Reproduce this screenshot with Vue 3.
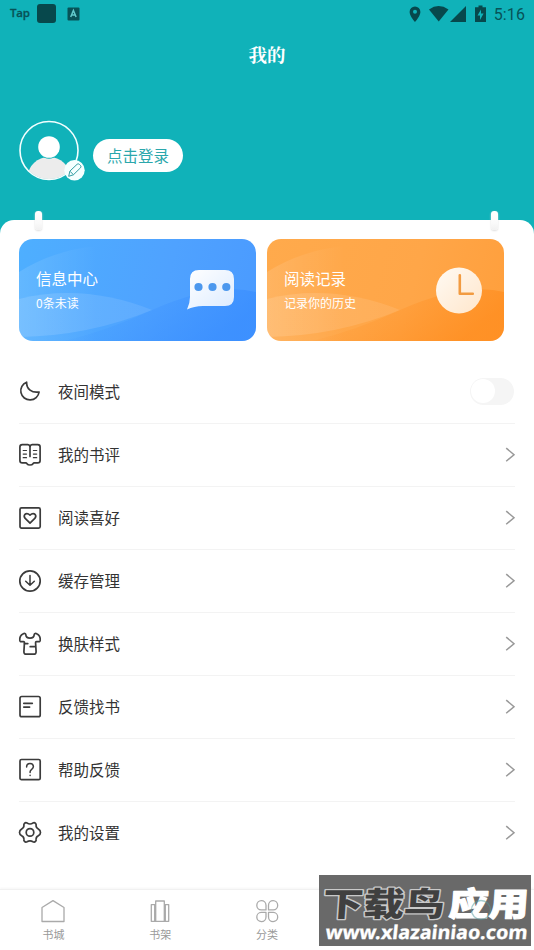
<script setup>
const cards = [
  { kind: 'blue', title: '信息中心', sub: '0条未读' },
  { kind: 'orange', title: '阅读记录', sub: '记录你的历史' },
]
const rows = [
  { icon: 'moon', label: '夜间模式' },
  { icon: 'book', label: '我的书评' },
  { icon: 'heart', label: '阅读喜好' },
  { icon: 'download', label: '缓存管理' },
  { icon: 'shirt', label: '换肤样式' },
  { icon: 'note', label: '反馈找书' },
  { icon: 'help', label: '帮助反馈' },
  { icon: 'gear', label: '我的设置' },
]
const tabs = [
  { icon: 'home', label: '书城' },
  { icon: 'shelf', label: '书架' },
  { icon: 'grid', label: '分类' },
]
</script>

<template>
  <div class="screen">
    <header class="hero">
      <div class="status">
        <span class="tap">Tap</span>
        <span class="block"></span>
        <svg class="abox" width="13" height="14" viewBox="0 0 13 14">
          <rect x="0.5" y="0.5" width="12" height="13" rx="1" fill="#075257" />
          <path d="M3.7 10 6.4 3.5 9.1 10M4.7 8h3.4" fill="none" stroke="#62c9cb" stroke-width="1.5" />
        </svg>
        <svg class="sys" width="75" height="20" viewBox="0 0 75 20">
          <g fill="#07484c">
            <path fill-rule="evenodd" d="M6 2.500a5.400 5.400 0 0 0-5.400 5.400C.6 12 6 18 6 18s5.400-6 5.400-10.100A5.400 5.400 0 0 0 6 2.500Zm0 3.300a2 2 0 1 1 0 4 2 2 0 0 1 0-4Z" />
            <path d="M20 5.500Q29.500-1.300 39.500 5.500L29.700 17.500Z" />
            <path d="M57 2v16H41Z" />
            <path fill-rule="evenodd" d="M69.500 1.500h4v1.800H77V18H66V3.300h3.500ZM72 5.500l-3.500 6h2.500v4.500l3.600-6.500h-2.600Z" />
          </g>
        </svg>
        <span class="time">5:16</span>
      </div>
      <h1>我的</h1>
      <div class="profile">
        <div class="avatar">
          <svg width="68" height="64" viewBox="0 0 68 64">
            <defs><clipPath id="face"><circle cx="30" cy="30.500" r="28.600" /></clipPath></defs>
            <circle cx="30" cy="30.500" r="29" fill="none" stroke="#f2ffff" stroke-width="1.600" />
            <ellipse cx="30" cy="56.500" rx="21" ry="19.500" fill="#ececec" clip-path="url(#face)" />
            <circle cx="30" cy="27" r="11.700" fill="#10b2b9" />
            <circle cx="30" cy="27" r="10.800" fill="#fff" />
            <circle cx="55.500" cy="50.300" r="10.200" fill="#f5ffff" />
            <path d="m49.700 56.300 1.200-5.200 7.300-6.900q1.200-.8 2.300.3l1 1q1 1.200 0 2.300l-7.100 7Zm1.500-4.900 3.200 3.300" fill="none" stroke="#319da2" stroke-width="1" stroke-linejoin="round" />
          </svg>
        </div>
        <button class="login">点击登录</button>
      </div>
    </header>

    <main class="sheet">
      <i class="pin left"></i>
      <i class="pin right"></i>
      <section class="cards">
        <article v-for="c in cards" :key="c.kind" class="card" :class="c.kind">
          <svg class="waves" viewBox="0 0 237 102" preserveAspectRatio="none">
            <defs>
              <linearGradient :id="'w' + c.kind" x1="0" x2="1"><stop offset="0" stop-color="#fff" stop-opacity=".12" /><stop offset="1" stop-color="#fff" stop-opacity="0" /></linearGradient>
              <linearGradient :id="'v' + c.kind" x1="0" x2="1"><stop offset="0" stop-color="#fff" stop-opacity=".13" /><stop offset="1" stop-color="#fff" stop-opacity=".09" /></linearGradient>
              <linearGradient :id="'d' + c.kind" x1="0" x2="1" y2=".35"><stop offset=".25" :stop-color="c.kind === 'blue' ? '#3288ff' : '#ff8512'" stop-opacity="0" /><stop offset="1" :stop-color="c.kind === 'blue' ? '#3288ff' : '#ff8512'" stop-opacity=".55" /></linearGradient>
            </defs>
            <path d="M0 33Q35 11 78 7V102H0Z" :fill="`url(#w${c.kind})`" />
            <path d="M0 60Q65 44 133 71Q70 97 0 98Z" :fill="`url(#v${c.kind})`" />
            <path d="M45 102Q90 91 133 71Q197 43 237 53V102Z" :fill="`url(#d${c.kind})`" />
          </svg>
          <div class="words"><strong>{{ c.title }}</strong><span>{{ c.sub }}</span></div>
          <svg v-if="c.kind === 'blue'" class="emblem" width="50" height="50" viewBox="0 0 50 50">
            <defs><linearGradient id="bub" x2="1" y2="1"><stop stop-color="#fff" /><stop offset="1" stop-color="#dcebff" /></linearGradient></defs>
            <path d="M13 5h26q9 0 9 9v18q0 9-9 9H17Q8 41 1 44.500 4 38 4 32V14q0-9 9-9Z" fill="url(#bub)" />
            <g fill="#4c98ee"><circle cx="12.500" cy="22" r="4.100" /><circle cx="26.500" cy="22" r="4.100" /><circle cx="40.300" cy="22" r="4.100" /></g>
          </svg>
          <svg v-else class="emblem" width="50" height="50" viewBox="0 0 50 50">
            <defs><linearGradient id="clk" x2="1" y2="1"><stop stop-color="#fffaf3" /><stop offset="1" stop-color="#ffe6cb" /></linearGradient></defs>
            <circle cx="25" cy="25.500" r="23" fill="url(#clk)" />
            <path d="M25.800 10.200V28.700h13" fill="none" stroke="#f29b41" stroke-width="2.600" stroke-linecap="round" stroke-linejoin="round" />
          </svg>
        </article>
      </section>

      <ul class="menu">
        <li v-for="r in rows" :key="r.icon">
          <svg class="ico" width="24" height="24" viewBox="0 0 24 24">
            <path v-if="r.icon === 'moon'" d="M8.600 2.200A9.200 9.200 0 1 0 21.100 12C13.800 13.200 8.400 9 8.600 2.200Z" />
            <template v-else-if="r.icon === 'book'">
              <path d="M12 3.300q-.8-1.700-2.200-1.700H4.300Q1.900 1.600 1.900 4v13.500q0 2.400 2.400 2.400h3.400q.8 0 1.300.8.800 1.300 3 1.300t3-1.300q.5-.8 1.300-.8h3.400q2.400 0 2.400-2.400V4q0-2.400-2.400-2.400h-5.500q-1.400 0-2.200 1.700Z" />
              <path d="M12 3.300V13.500" />
              <path class="thin" d="M5.200 7.500h3.300M5.200 11.100h3.300M5.200 14.700h3.300M15.400 7.500h3.300M15.400 11.100h3.300M15.400 14.700h3.300" />
            </template>
            <template v-else-if="r.icon === 'heart'">
              <rect x="2" y="1.900" width="20.200" height="20.200" rx="1.500" />
              <path d="M12 17.100 7.200 12.400Q5.500 10.400 6.700 8.600 9 6.300 12 9.100 15 6.300 17.300 8.600 18.500 10.400 16.800 12.400Z" />
            </template>
            <template v-else-if="r.icon === 'download'">
              <circle cx="12" cy="12" r="10.200" /><path class="mid" d="M12 6.500V16M7.700 12.200 12 16.300l4.300-4.100" />
            </template>
            <template v-else-if="r.icon === 'shirt'">
              <path d="M7.800 2.600C8 7.200 16 7.200 16.200 2.600C16.500 1.300 17.600 1.100 18.700 1.800C21 3 22.500 5.800 22.200 8.400C22 9.500 21.400 9.800 20.500 9.600H18.600C17.600 9.700 17.500 10.400 17.600 11.400L18.100 19.600Q18.200 22.200 15.700 22.200H8.300Q5.800 22.200 5.900 19.600L6.400 11.400C6.500 10.400 6.400 9.700 5.400 9.600H3.500C2.600 9.800 2 9.500 1.800 8.400C1.500 5.800 3 3 5.300 1.800C6.400 1.100 7.500 1.300 7.800 2.600Z" />
              <path d="M6.600 11.600h3.200M12.200 14.700h5" />
            </template>
            <template v-else-if="r.icon === 'note'">
              <rect x="2" y="1.500" width="20.200" height="20.200" rx="1.800" /><path d="M5.800 8.300h8.500M5.800 12.100h5.800" />
            </template>
            <template v-else-if="r.icon === 'help'">
              <rect x="2" y="1.500" width="20.200" height="20.200" rx="1.500" />
              <path class="mid" d="M8.600 8.900Q8.700 5.500 12 5.500t3.400 3.100q0 1.600-1.700 2.700-1.600 1.100-1.600 2.500v.7M12.100 17.200v.4" />
            </template>
            <g v-else transform="translate(0 -.6)">
              <path d="M9 2.600Q12 4.600 15 2.600 16.400 1.800 17.700 3.200 18.300 3.800 18.100 5 17.900 7.400 20.300 8.600 22.500 10 22.500 12T20.300 15.400Q17.900 16.600 18.100 19 18.300 20.200 17.700 20.800 16.400 22.200 15 21.400 12 19.400 9 21.400 7.600 22.200 6.300 20.800 5.700 20.200 5.900 19 6.100 16.600 3.700 15.400 1.500 14 1.500 12T3.700 8.600Q6.100 7.400 5.900 5 5.700 3.800 6.300 3.200 7.600 1.800 9 2.600Z" />
              <circle cx="12" cy="12" r="3.800" />
            </g>
          </svg>
          <span class="label">{{ r.label }}</span>
          <span v-if="r.icon === 'moon'" class="toggle"></span>
          <svg v-else class="chev" width="12" height="16" viewBox="0 0 12 16"><path d="m2.200 1.100 7.800 6.600-7.800 6.600" fill="none" stroke="#999" stroke-width="1.500" /></svg>
        </li>
      </ul>
    </main>

    <nav class="tabs">
      <div v-for="t in tabs" :key="t.icon" class="tab">
        <svg width="26" height="24" viewBox="0 0 26 24">
          <path v-if="t.icon === 'home'" d="M2 8.500 13 1.600l11 6.900V22.500H2Z" />
          <path v-else-if="t.icon === 'shelf'" d="M8.700 22.300V2h8.600v20.300M8.700 5.600H4.300v16.700h17.400V5.600h-4.400M7.700 5.600v16.700M18.300 5.600v16.700" />
          <path v-else d="M12 10.900H7.200a4.600 4.600 0 1 1 4.800-4.700ZM14.500 10.900h4.800a4.600 4.600 0 1 0-4.800-4.700ZM12 13.400H7.200a4.600 4.600 0 1 0 4.800 4.600ZM14.500 13.400h4.800a4.600 4.600 0 1 1-4.800 4.600Z" />
        </svg>
        <span>{{ t.label }}</span>
      </div>
    </nav>

    <aside class="mark">
      <svg width="212" height="71" viewBox="0 0 212 71">
        <g class="big" transform="translate(2 40.500) skewX(-4)">
          <text class="dark" x="1" y="0" textLength="122" lengthAdjust="spacingAndGlyphs">下载鸟</text>
          <text class="lite" x="127" y="0" textLength="80" lengthAdjust="spacingAndGlyphs">应用</text>
        </g>
        <g fill="none" stroke="#4f9a9e" stroke-width="1.300" opacity=".5"><circle cx="162" cy="35" r="9.500" /></g>
        <text class="url" transform="translate(6 64) skewX(-6)" x="0" y="0" textLength="202" lengthAdjust="spacingAndGlyphs">www.xlazainiao.com</text>
      </svg>
    </aside>
  </div>
</template>

<style>
body { margin: 0; background: #fff; }
</style>

<style scoped>
* { box-sizing: border-box; }
.screen { position: relative; width: 534px; height: 950px; overflow: hidden; display: flex; flex-direction: column; background: #10b2b9; font-family: Roboto, "Noto Sans CJK SC", sans-serif; }
.hero { height: 220px; flex: none; }
.status { height: 27px; display: flex; align-items: center; padding: 0 9px 0 10px; color: #075257; }
.tap { width: 27px; font: 600 11.500px/12px "Open Sans", sans-serif; letter-spacing: -.2px; padding-bottom: 2px; -webkit-text-stroke: .3px #075257; }
.block { width: 19px; height: 19px; border-radius: 3px; background: #07484c; }
.abox { margin-left: 11px; }
.sys { margin-left: auto; overflow: visible; margin-right: 10px; }
.time { font-size: 16px; line-height: 20px; color: #075257; padding-top: 2px; letter-spacing: .1px; }
h1 { margin: 15px 0 0; height: 28px; text-align: center; color: #fff; font: 700 18.500px/28px "Liberation Serif", "Noto Serif CJK SC", "Noto Sans CJK SC", serif; }
.profile { display: flex; padding: 50px 0 0 19px; }
.avatar { width: 74px; height: 64px; }
.login { margin: 19px 0 0; width: 90px; height: 33px; padding: 0; border: 0; border-radius: 17px; background: #fff; color: #2ba7ac; font: 15.500px/33px "Noto Sans CJK SC", sans-serif; }
.sheet { position: relative; flex: 1; min-height: 0; background: #fff; border-radius: 14px 14px 0 0; padding: 19px 19px 0; }
.pin { position: absolute; top: -9px; width: 7px; height: 19px; border-radius: 3px; background: linear-gradient(#fff, #fafafa 60%, #f1f1f1); box-shadow: 0 1px 2px #ddd; }
.pin.left { left: 35px; }
.pin.right { right: 36px; }
.cards { display: flex; gap: 11px; }
.card { position: relative; width: 237px; height: 102px; border-radius: 14px; overflow: hidden; display: flex; align-items: center; justify-content: space-between; padding: 0 20px 0 17px; color: #fff; }
.blue { background: linear-gradient(105deg, #4eafff, #4fa2ff 60%, #4a9aff); }
.orange { background: linear-gradient(105deg, #ffaa4c, #ffa648 60%, #ff9f3c); }
.waves { position: absolute; inset: 0; width: 100%; height: 100%; }
.words { position: relative; display: flex; flex-direction: column; font-family: "Noto Sans CJK SC", sans-serif; }
.words strong { font-weight: 400; font-size: 15.500px; line-height: 26px; }
.words span { font-size: 12px; line-height: 24px; }
.emblem { position: relative; }
.menu { list-style: none; margin: 20px 0 0; padding: 0; }
.menu li { display: flex; align-items: center; height: 63px; border-bottom: 1px solid #f3f3f3; }
.menu li:last-child { border-color: transparent; }
.ico { margin-left: -1px; fill: none; stroke: #3b3b3b; stroke-width: 1.700; stroke-linejoin: round; stroke-linecap: round; }
.thin { stroke-width: 1.200; }
.mid { stroke-width: 1.500; }
.label { margin-left: 16px; font: 15.500px/24px "Noto Sans CJK SC", sans-serif; color: #333; padding-bottom: 2px; }
.toggle { margin: 0 1px 2px auto; width: 44px; height: 27px; border-radius: 14px; background: #f5f5f5; display: flex; align-items: center; padding: 1px; }
.toggle::before { content: ""; width: 24px; height: 24px; border-radius: 50%; background: #fff; }
.chev { margin-left: auto; margin-right: -1px; }
.tabs { flex: none; height: 61px; background: #fff; border-top: 1px solid #f1f1f1; box-shadow: 0 -1px 2px #f6f6f6; display: grid; grid-template-columns: repeat(5, 1fr); position: relative; }
.tab { display: flex; flex-direction: column; align-items: center; padding-top: 9px; color: #999; font: 11px/19px "Noto Sans CJK SC", sans-serif; }
.tab svg { fill: none; stroke: #aaa; stroke-width: 1.300; stroke-linejoin: round; }
.tab span { margin-top: 2px; }
.mark { position: absolute; left: 319px; top: 875px; width: 212px; height: 71px; background: #696969; }
.mark svg { display: block; }
.big { font: 900 33px "Noto Sans CJK SC", sans-serif; paint-order: stroke; stroke-linejoin: round; }
.dark { fill: #404040; stroke: #c9c9c9; stroke-width: 2.600px; }
.lite { fill: #fff; stroke: #fff; stroke-width: 1px; }
.url { font: 700 19px "Noto Sans", "Open Sans", sans-serif; fill: #fff; stroke: #fff; stroke-width: .3px; }
</style>
